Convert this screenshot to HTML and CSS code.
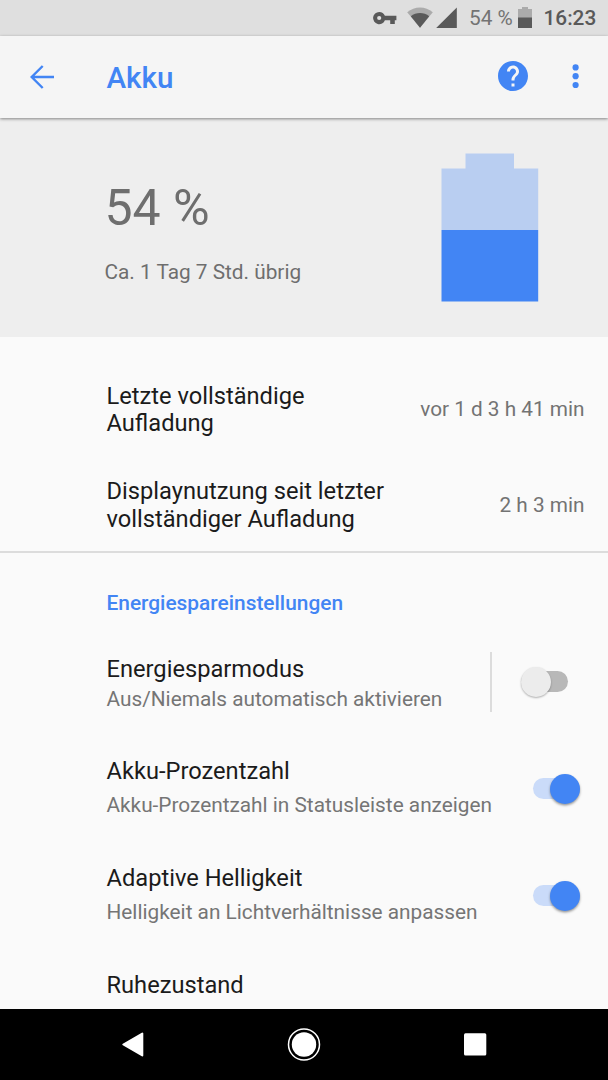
FILE: index.html
```html
<!DOCTYPE html>
<html lang="de">
<head>
<meta charset="utf-8">
<title>Akku</title>
<link rel="stylesheet" href="styles.css">
</head>
<body>
<div class="screen">
  <div class="statusbar">
    <svg class="status-icons" width="109" height="36" viewBox="0 0 109 36" aria-hidden="true">
      <path fill="#595959" fill-rule="evenodd" d="M19.2 12a6.1 6.1 0 0 1 5.7 3.8H36.4v4.4h-1.600V24h-4.600v-3.800h-5.300A6.100 6.100 0 1 1 19.200 12zm0 3.900a2.100 2.100 0 1 0 0 4.200 2.100 2.100 0 0 0 0-4.200z"/>
      <path fill="#ababab" d="M47.200 12.200C54.500 5.800 65.500 5.800 72.800 12.200L60 27.700z"/>
      <path fill="#595959" d="M50.800 16.300C56 11.900 64 11.900 69.200 16.300L60 27.700z"/>
      <path fill="#595959" d="M76.200 28H96.800V7.500z"/>
    </svg>
    <span class="status-percent">54 %</span>
    <svg class="status-battery" width="14" height="22" viewBox="0 0 14 22" aria-hidden="true">
      <path fill="#ababab" d="M4 0h6v2h4v9H0V2h4z"/>
      <path fill="#595959" d="M0 10.500h14V21H0z"/>
    </svg>
    <span class="status-time">16:23</span>
  </div>
  <header class="appbar">
    <svg class="back" width="24" height="24" viewBox="0 0 24 24" fill="none" stroke="#4285f4" stroke-width="2.400" aria-label="Zurück">
      <path d="M12.700 1L1.700 12l11 11M1.700 12H24"/>
    </svg>
    <h1 class="title">Akku</h1>
    <svg class="help" width="30" height="30" viewBox="2 2 20 20" aria-label="Hilfe">
      <path fill="#4285f4" d="M12 2C6.480 2 2 6.480 2 12s4.480 10 10 10 10-4.480 10-10S17.520 2 12 2zm1 17h-2v-2h2v2zm2.070-7.750l-.9.920C13.450 12.900 13 13.500 13 15h-2v-.5c0-1.100.45-2.100 1.170-2.830l1.240-1.260c.37-.36.59-.86.59-1.410 0-1.100-.9-2-2-2s-2 .9-2 2H8c0-2.210 1.790-4 4-4s4 1.790 4 4c0 .88-.36 1.680-.93 2.250z"/>
    </svg>
    <svg class="more" width="8" height="26" viewBox="0 0 8 26" fill="#4285f4" aria-label="Mehr">
      <circle cx="4.600" cy="4.400" r="3.100"/><circle cx="4.600" cy="13.200" r="3.100"/><circle cx="4.600" cy="22" r="3.100"/>
    </svg>
  </header>
  <section class="summary">
    <div class="summary-text">
      <div class="level">54 %</div>
      <div class="remaining">Ca. 1 Tag 7 Std. übrig</div>
    </div>
    <svg class="battery" width="98" height="150" viewBox="0 0 98 150" aria-hidden="true">
      <path fill="#b9cef1" d="M24.500 .500H73v15h24.200V77H.500V15.500h24z"/>
      <path fill="#4285f4" d="M.500 77h96.700v71.500H.500z"/>
    </svg>
  </section>
  <section class="stats">
    <div class="stat">
      <div class="name">Letzte vollständige<br>Aufladung</div>
      <div class="value">vor 1 d 3 h 41 min</div>
    </div>
    <div class="stat">
      <div class="name">Displaynutzung seit letzter<br>vollständiger Aufladung</div>
      <div class="value">2 h 3 min</div>
    </div>
  </section>
  <section class="prefs">
    <h2 class="category">Energiespareinstellungen</h2>
    <div class="pref saver">
      <div class="pref-text">
        <div class="name">Energiesparmodus</div>
        <div class="detail">Aus/Niemals automatisch aktivieren</div>
      </div>
      <div class="split"></div>
      <div class="switch"><div class="thumb"></div></div>
    </div>
    <div class="pref">
      <div class="pref-text">
        <div class="name">Akku-Prozentzahl</div>
        <div class="detail">Akku-Prozentzahl in Statusleiste anzeigen</div>
      </div>
      <div class="switch on"><div class="thumb"></div></div>
    </div>
    <div class="pref">
      <div class="pref-text">
        <div class="name">Adaptive Helligkeit</div>
        <div class="detail">Helligkeit an Lichtverhältnisse anpassen</div>
      </div>
      <div class="switch on"><div class="thumb"></div></div>
    </div>
    <div class="pref">
      <div class="pref-text">
        <div class="name">Ruhezustand</div>
      </div>
    </div>
  </section>
  <nav class="navbar">
    <svg width="608" height="71" viewBox="0 0 608 71" aria-hidden="true">
      <path fill="#fff" stroke="#fff" stroke-width="2" stroke-linejoin="round" d="M123.300 35.500L142.300 24.500V46.500z"/>
      <circle cx="304" cy="35.500" r="15.500" fill="none" stroke="#fff" stroke-width="1.500"/>
      <circle cx="304" cy="35.500" r="12.200" fill="#fff"/>
      <rect x="464" y="24.300" width="22.300" height="22.300" rx="1.500" fill="#fff"/>
    </svg>
  </nav>
</div>
</body>
</html>
```
FILE: styles.css
```css
* { box-sizing: border-box; }

body {
  margin: 0;
  background: #fafafa;
  font-family: Roboto, "Liberation Sans", sans-serif;
}

.screen {
  display: flex;
  flex-direction: column;
  width: 608px;
  height: 1080px;
  overflow: hidden;
}

.statusbar {
  display: flex;
  flex: none;
  align-items: center;
  justify-content: flex-end;
  height: 35.5px;
  padding-right: 12px;
  background: #dfdfdf;
  color: #595959;
  font-size: 20.8px;
  line-height: 37px;
  white-space: nowrap;
}

.status-icons { flex: none; }
.status-percent { width: 49px; padding-top: 1.5px; color: #737373; }
.status-battery { flex: none; }
.status-time { width: 64px; padding: 1.5px 0 0 11.5px; font-weight: 500; }

.appbar {
  z-index: 1;
  display: flex;
  flex: none;
  align-items: center;
  height: 82.5px;
  padding: 0 29px 0 29.7px;
  background: #f5f5f5;
  box-shadow: 0 1px 3px rgba(0, 0, 0, .45);
}

.title {
  flex: 1;
  margin: 2.5px 0 0 52.8px;
  color: #4285f4;
  font-size: 29.6px;
  font-weight: 500;
  line-height: 35px;
}

.help { margin: -2px 43.5px 0 0; }
.more { margin-top: -1px; }

.summary {
  display: flex;
  flex: none;
  justify-content: space-between;
  height: 219px;
  padding: 35px 69.5px 0 106px;
  background: #eee;
  color: #6e6e6e;
}

.level { margin: 26px 0 0 -1.5px; font-size: 50px; line-height: 58px; }
.remaining { margin: 23px 0 0 -1.5px; font-size: 20.8px; line-height: 24px; }

.stats {
  flex: none;
  height: 216px;
  padding: 25.6px 23.5px 0 106.5px;
  border-bottom: 2px solid #dcdcdc;
}

.stat {
  display: flex;
  align-items: center;
  justify-content: space-between;
  height: 95.5px;
}

.name { color: #1b1b1b; font-size: 23.66px; line-height: 27.7px; white-space: nowrap; }
.value { margin-top: -2.4px; color: #737373; font-size: 20.78px; line-height: 24.3px; }

.prefs {
  flex: 1;
  min-height: 0;
  overflow: hidden;
  padding: 38px 28.5px 0 106.5px;
}

.category {
  margin: 0 0 17.7px;
  color: #4285f4;
  font-size: 20.88px;
  font-weight: 500;
  line-height: 24.3px;
}

.pref { display: flex; height: 107px; padding-top: 23px; }
.pref-text { flex: 1; }
.detail { margin-top: 7px; color: #757575; font-size: 20.8px; line-height: 24.3px; white-space: nowrap; }
.saver { height: 102.5px; padding-right: 12px; }
.saver .detail { margin-top: 3px; }

.split {
  width: 2px;
  height: 60px;
  margin: -4px 28.5px 0 0;
  background: #dcdcdc;
}

.switch {
  position: relative;
  width: 47px;
  height: 21px;
  margin-top: 15.5px;
}

.switch.on { margin-top: 20px; }

.switch::before {
  content: "";
  display: block;
  width: 47px;
  height: 21px;
  border-radius: 11px;
  background: #b8b8b8;
}

.switch.on::before { background: #cadbf9; }

.thumb {
  position: absolute;
  top: -4.5px;
  left: 0;
  width: 30px;
  height: 30px;
  border-radius: 50%;
  background: #ececec;
  box-shadow: 0 1.5px 2.5px rgba(0, 0, 0, .4);
}

.switch:not(.on) .thumb { box-shadow: 0 1px 2px rgba(0, 0, 0, .3); }
.switch.on .thumb { left: 17px; background: #4285f4; }

.navbar { flex: none; height: 71px; background: #000; }
.navbar svg { display: block; }
```
